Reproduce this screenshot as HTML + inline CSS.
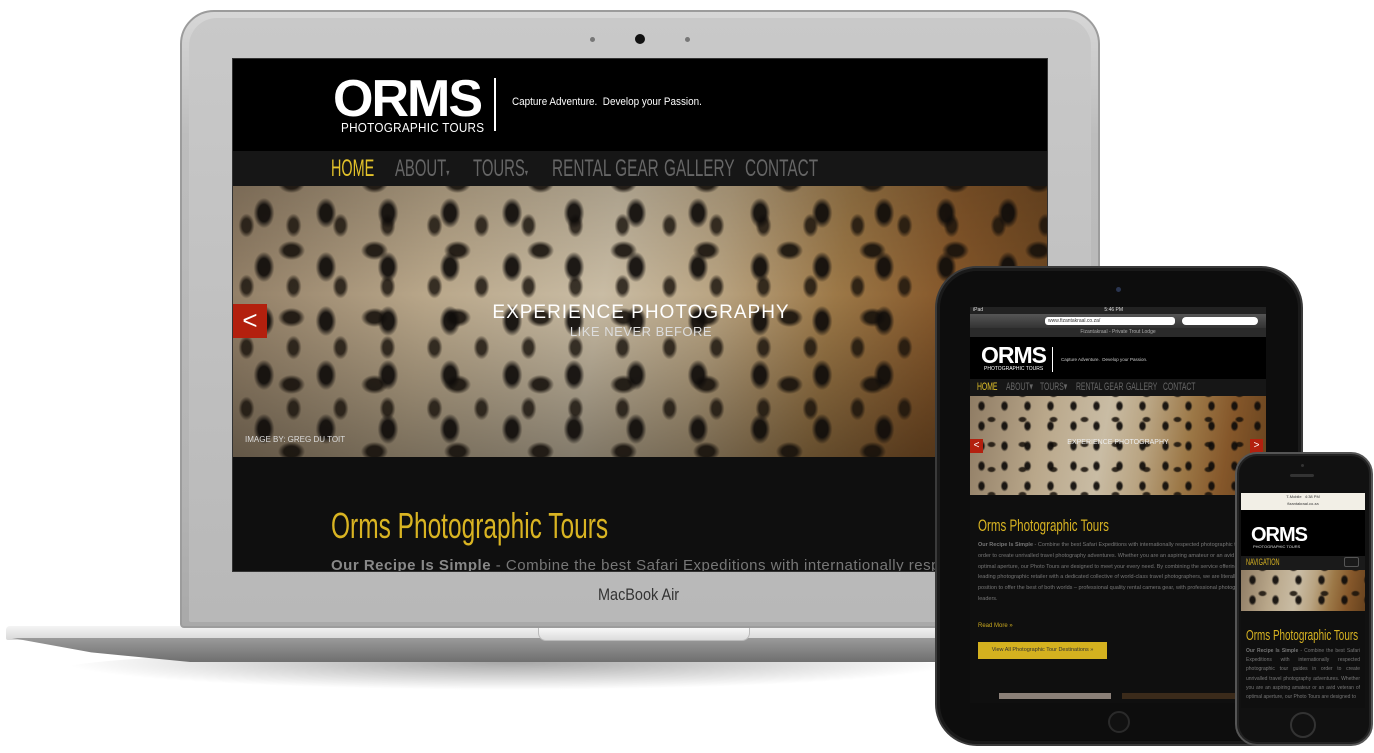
<!DOCTYPE html>
<html><head><meta charset="utf-8"><style>
*{margin:0;padding:0;box-sizing:border-box}
body{width:1374px;height:753px;background:#fff;position:relative;overflow:hidden;font-family:"Liberation Sans",sans-serif}
.a{position:absolute}
.nar{font-family:"Liberation Sans Narrow","Liberation Sans",sans-serif;display:inline-block;transform-origin:left center;white-space:nowrap}
.leo{background:
 radial-gradient(ellipse 13px 19px at 50% 50%,rgba(15,12,10,.92) 45%,transparent 80%) 0 0/62px 54px,
 radial-gradient(ellipse 17px 12px at 50% 50%,rgba(20,15,10,.88) 45%,transparent 80%) 17px 31px/83px 67px,
 radial-gradient(ellipse 10px 15px at 50% 50%,rgba(22,16,10,.8) 45%,transparent 80%) 37px 9px/47px 61px,
 linear-gradient(180deg,rgba(0,0,0,.15) 0%,rgba(0,0,0,0) 40%,rgba(0,0,0,.35) 100%),
 linear-gradient(100deg,#8f7c64 0%,#b9a78a 25%,#c9bca4 45%,#b9a482 58%,#9c7847 72%,#85572a 85%,#66421e 100%)}
.leo.s{background:
 radial-gradient(ellipse 5px 7px at 50% 50%,rgba(15,12,10,.92) 45%,transparent 80%) 0 0/23px 20px,
 radial-gradient(ellipse 6px 4px at 50% 50%,rgba(22,16,10,.85) 45%,transparent 80%) 6px 11px/31px 25px,
 linear-gradient(100deg,#8f7c64 0%,#b9a78a 25%,#c9bca4 45%,#b9a482 58%,#9c7847 72%,#85572a 85%,#66421e 100%)}
</style></head><body>

<div class="a" style="left:60px;top:650px;width:900px;height:40px;border-radius:50%;background:radial-gradient(ellipse at 50% 30%,rgba(0,0,0,.35),rgba(0,0,0,0) 70%)"></div>
<div class="a" style="left:6px;top:626px;width:1000px;height:14px;background:linear-gradient(#f4f4f4,#d8d8d8);border-radius:4px 0 0 2px"></div>
<div class="a" style="left:12px;top:638px;width:990px;height:24px;background:linear-gradient(#9a9a9a,#6f6f6f);clip-path:polygon(0 0,100% 0,100% 100%,18% 100%,8% 60%)"></div>
<div class="a" style="left:538px;top:627px;width:212px;height:14px;background:linear-gradient(#fafafa,#dcdcdc);border-radius:0 0 8px 8px;border:1px solid #bbb;border-top:none"></div>
<div class="a" style="left:180px;top:10px;width:920px;height:618px;border-radius:34px 34px 4px 4px;background:linear-gradient(180deg,#d7d7d7,#bdbdbd 20%,#b3b3b3 80%,#a9a9a9);border:2px solid #9c9c9c"></div>
<div class="a" style="left:189px;top:18px;width:902px;height:604px;border-radius:28px 28px 2px 2px;background:linear-gradient(180deg,#c9c9c9,#b8b8b8)"></div>
<div class="a" style="left:590px;top:37px;width:5px;height:5px;border-radius:50%;background:#777"></div>
<div class="a" style="left:635px;top:34px;width:10px;height:10px;border-radius:50%;background:#111"></div>
<div class="a" style="left:685px;top:37px;width:5px;height:5px;border-radius:50%;background:#777"></div>
<div class="a nar" style="left:598px;top:585px;font-size:17px;color:#333;transform:scaleX(.85)">MacBook Air</div>

<div class="a" style="left:232px;top:58px;width:816px;height:514px;background:#000;overflow:hidden;border:1px solid #333">
  <div class="a" style="left:100px;top:14px;color:#fff;font-weight:900;font-size:52px;letter-spacing:-2px;line-height:52px">ORMS</div>
  <div class="a nar" style="left:108px;top:61px;color:#fff;font-size:13px;letter-spacing:.3px;transform:scaleX(.9)">PHOTOGRAPHIC TOURS</div>
  <div class="a" style="left:261px;top:19px;width:2px;height:53px;background:#fff"></div>
  <div class="a nar" style="left:279px;top:37px;color:#fff;font-size:11px;transform:scaleX(.9)">Capture Adventure.&nbsp; Develop your Passion.</div>
  <div class="a" style="left:0;top:92px;width:816px;height:35px;background:#161616"></div>
  <div class="a" style="left:0;top:96px;font-size:24px;color:#666;height:28px;width:816px">
    <span class="a nar" style="left:98px;color:#e3c22a;transform:scaleX(.6)">HOME</span>
    <span class="a nar" style="left:162px;transform:scaleX(.62)">ABOUT<small style="font-size:10px">▾</small></span>
    <span class="a nar" style="left:240px;transform:scaleX(.62)">TOURS<small style="font-size:10px">▾</small></span>
    <span class="a nar" style="left:319px;transform:scaleX(.64)">RENTAL GEAR</span>
    <span class="a nar" style="left:431px;transform:scaleX(.64)">GALLERY</span>
    <span class="a nar" style="left:512px;transform:scaleX(.64)">CONTACT</span>
  </div>
  <div class="a leo" style="left:0;top:127px;width:816px;height:271px"></div>
  <div class="a" style="left:0;top:245px;width:34px;height:34px;background:#b3200e;color:#fff;font-size:26px;text-align:center;line-height:32px">&lt;</div>
  <div class="a" style="left:0;top:243px;width:816px;text-align:center;color:#fff;font-size:19px;letter-spacing:1px">EXPERIENCE PHOTOGRAPHY</div>
  <div class="a" style="left:0;top:265px;width:816px;text-align:center;color:#ddd;font-size:13px;letter-spacing:.5px">LIKE NEVER BEFORE</div>
  <div class="a" style="left:12px;top:376px;color:#ddd;font-size:8px">IMAGE BY: GREG DU TOIT</div>
  <div class="a" style="left:0;top:398px;width:816px;height:120px;background:#0f0f0f"></div>
  <div class="a nar" style="left:98px;top:446px;color:#d9b422;font-size:36px;transform:scaleX(.68)">Orms Photographic Tours</div>
  <div class="a" style="left:98px;top:498px;color:#777;font-size:15px;white-space:nowrap;letter-spacing:.5px"><b style="color:#888">Our Recipe Is Simple</b> - Combine the best Safari Expeditions with internationally respected</div>
</div>

<div class="a" style="left:935px;top:266px;width:368px;height:480px;border-radius:42px;background:#0d0d0d;border:2px solid #3a3a3a;box-shadow:inset 0 0 0 3px #1a1a1a"></div>
<div class="a" style="left:1116px;top:287px;width:5px;height:5px;border-radius:50%;background:#2a3550"></div>
<div class="a" style="left:1108px;top:711px;width:22px;height:22px;border-radius:50%;border:2px solid #2a2a2a;background:#111"></div>
<div class="a" style="left:970px;top:307px;width:296px;height:396px;background:#0f0f0f;overflow:hidden">
  <div class="a" style="left:0;top:0;width:296px;height:7px;background:#222;color:#ddd;font-size:5px;line-height:7px;padding-left:3px">iPad <span style="margin-left:120px">5:46 PM</span></div>
  <div class="a" style="left:0;top:7px;width:296px;height:14px;background:linear-gradient(#555,#333)"></div>
  <div class="a" style="left:75px;top:10px;width:130px;height:8px;background:#fff;border-radius:3px;font-size:5px;line-height:8px;color:#333;padding-left:3px">www.fizantakraal.co.za/</div>
  <div class="a" style="left:212px;top:10px;width:76px;height:8px;background:#fff;border-radius:4px"></div>
  <div class="a" style="left:0;top:21px;width:296px;height:9px;background:#2a2a2a;color:#aaa;font-size:5px;text-align:center;line-height:9px">Fizantakraal - Private Trout Lodge</div>
  <div class="a" style="left:0;top:30px;width:296px;height:42px;background:#000"></div>
  <div class="a" style="left:11px;top:37px;color:#fff;font-weight:900;font-size:23px;line-height:23px;letter-spacing:-1px">ORMS</div>
  <div class="a" style="left:14px;top:59px;color:#fff;font-size:5px">PHOTOGRAPHIC TOURS</div>
  <div class="a" style="left:82px;top:40px;width:1px;height:25px;background:#fff"></div>
  <div class="a" style="left:91px;top:50px;color:#ccc;font-size:4.5px">Capture Adventure.&nbsp; Develop your Passion.</div>
  <div class="a" style="left:0;top:72px;width:296px;height:17px;background:#161616;font-size:11px;color:#666;line-height:17px">
    <span class="a nar" style="left:7px;color:#e3c22a;transform:scaleX(.62)">HOME</span>
    <span class="a nar" style="left:36px;transform:scaleX(.62)">ABOUT▾</span>
    <span class="a nar" style="left:70px;transform:scaleX(.62)">TOURS▾</span>
    <span class="a nar" style="left:106px;transform:scaleX(.62)">RENTAL GEAR</span>
    <span class="a nar" style="left:156px;transform:scaleX(.62)">GALLERY</span>
    <span class="a nar" style="left:193px;transform:scaleX(.62)">CONTACT</span>
  </div>
  <div class="a leo s" style="left:0;top:89px;width:296px;height:99px"></div>
  <div class="a" style="left:0;top:132px;width:13px;height:14px;background:#b3200e;color:#fff;font-size:10px;text-align:center;line-height:14px">&lt;</div>
  <div class="a" style="left:280px;top:132px;width:13px;height:14px;background:#b3200e;color:#fff;font-size:10px;text-align:center;line-height:14px">&gt;</div>
  <div class="a" style="left:0;top:132px;width:296px;text-align:center;color:#eee;font-size:7px">EXPERIENCE PHOTOGRAPHY</div>
  <div class="a nar" style="left:8px;top:209px;color:#d9b422;font-size:17px;transform:scaleX(.68)">Orms Photographic Tours</div>
  <div class="a" style="left:8px;top:233px;width:290px;color:#777;font-size:5.5px;line-height:10.8px"><b>Our Recipe Is Simple</b> - Combine the best Safari Expeditions with internationally respected photographic tour guides in order to create unrivalled travel photography adventures. Whether you are an aspiring amateur or an avid veteran of optimal aperture, our Photo Tours are designed to meet your every need. By combining the service offerings of Africa's leading photographic retailer with a dedicated collective of world-class travel photographers, we are literally in a position to offer the best of both worlds – professional quality rental camera gear, with professional photographic tour leaders.</div>
  <div class="a" style="left:8px;top:316px;color:#c9a81f;font-size:6px">Read More »</div>
  <div class="a" style="left:8px;top:335px;width:129px;height:17px;background:#d4b11f;color:#333;font-size:5.5px;text-align:center;line-height:17px">View All Photographic Tour Destinations »</div>
  <div class="a" style="left:29px;top:386px;width:112px;height:6px;background:#8b8078"></div>
  <div class="a" style="left:152px;top:386px;width:144px;height:6px;background:#3a2a1a"></div>
</div>

<div class="a" style="left:1235px;top:452px;width:138px;height:294px;border-radius:22px;background:#111;border:2px solid #555;box-shadow:inset 0 0 0 2px #222"></div>
<div class="a" style="left:1290px;top:474px;width:24px;height:3px;border-radius:2px;background:#333"></div>
<div class="a" style="left:1301px;top:464px;width:3px;height:3px;border-radius:50%;background:#333"></div>
<div class="a" style="left:1290px;top:712px;width:26px;height:26px;border-radius:50%;border:2px solid #333"></div>
<div class="a" style="left:1241px;top:490px;width:124px;height:218px;background:#0f0f0f;overflow:hidden">
  <div class="a" style="left:0;top:3px;width:124px;height:17px;background:#f2efe6;font-size:4px;color:#333;text-align:center;line-height:7px">T-Mobile &nbsp; 4:38 PM<br>fizantakraal.co.za</div>
  <div class="a" style="left:0;top:20px;width:124px;height:58px;background:#000"></div>
  <div class="a" style="left:10px;top:35px;color:#fff;font-weight:900;font-size:20px;line-height:20px;letter-spacing:-1px">ORMS</div>
  <div class="a" style="left:12px;top:54px;color:#ddd;font-size:4px">PHOTOGRAPHIC TOURS</div>
  <div class="a" style="left:0;top:66px;width:124px;height:14px;background:#1a1a1a"></div>
  <div class="a nar" style="left:5px;top:67px;color:#d9b422;font-size:9px;transform:scaleX(.62)">NAVIGATION</div>
  <div class="a" style="left:103px;top:67px;width:15px;height:10px;border:1px solid #555;border-radius:2px"></div>
  <div class="a leo s" style="left:0;top:80px;width:124px;height:41px"></div>
  <div class="a nar" style="left:5px;top:137px;color:#d9b422;font-size:15px;transform:scaleX(.66)">Orms Photographic Tours</div>
  <div class="a" style="left:5px;top:157px;width:114px;color:#777;font-size:5px;line-height:9.2px;text-align:justify"><b>Our Recipe Is Simple</b> - Combine the best Safari Expeditions with internationally respected photographic tour guides in order to create unrivalled travel photography adventures. Whether you are an aspiring amateur or an avid veteran of optimal aperture, our Photo Tours are designed to</div>
</div>
</body></html>
